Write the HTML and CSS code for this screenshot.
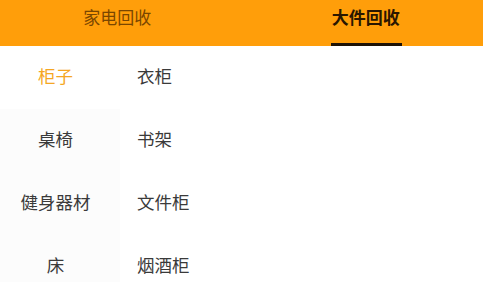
FILE: index.html
```html
<!DOCTYPE html>
<html lang="zh-CN">

<head>
    <meta charset="UTF-8" />
    <meta name="viewport" content="width=device-width, initial-scale=1" />
    <title>回收分类</title>
    <link rel="stylesheet" href="styles.css">
</head>

<body>
    <div class="tabs">
        <div class="tab">家电回收</div>
        <div class="tab active">大件回收</div>
    </div>

    <div class="content">
        <ul class="side">
            <li class="selected">柜子</li>
            <li>桌椅</li>
            <li>健身器材</li>
            <li>床</li>
        </ul>
        <ul class="list">
            <li>衣柜</li>
            <li>书架</li>
            <li>文件柜</li>
            <li>烟酒柜</li>
        </ul>
    </div>
</body>

</html>
```

FILE: styles.css
```css
* {
    margin: 0;
    padding: 0;
    box-sizing: border-box;
}

body {
    font-family: "Noto Sans CJK SC", "Noto Sans", sans-serif;
    background: #ffffff;
    overflow: hidden;
}

/* Barra de abas */
.tabs {
    height: 46px;
    background: #ff9e0a;
    display: flex;
}

.tab {
    flex: 1;
    display: flex;
    justify-content: center;
    align-items: center;
    padding-bottom: 13px;
    padding-right: 6px;
    font-size: 17px;
    color: #7a4600;
    position: relative;
}

.tab.active {
    color: #2a1600;
    font-weight: bold;
    padding-left: 8px;
    padding-right: 0;
}

.tab.active::after {
    content: '';
    position: absolute;
    bottom: 0;
    left: 50%;
    width: 71px;
    height: 3px;
    margin-left: -31px;
    background: #1e1206;
}

.content {
    display: flex;
}

ul {
    list-style: none;
}

.side {
    width: 120px;
    background: #fcfcfc;
}

.side li,
.list li {
    height: 63px;
    padding-bottom: 4px;
    display: flex;
    align-items: center;
    font-size: 17.5px;
    color: #3a3a3a;
}

.side li {
    justify-content: center;
    padding-right: 9px;
}

.side li.selected {
    background: #ffffff;
    color: #f5a623;
}

.list {
    flex: 1;
    padding-left: 17px;
}
```
